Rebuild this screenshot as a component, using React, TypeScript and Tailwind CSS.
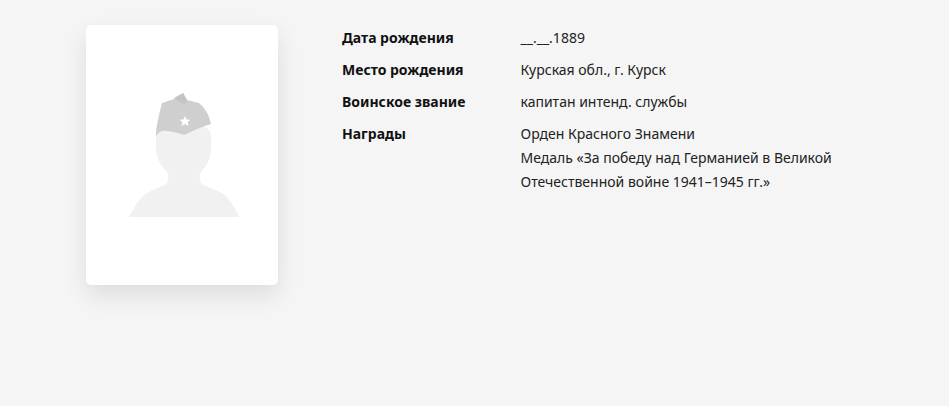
const facts = [
  { label: 'Дата рождения', lines: ['__.__.1889'] },
  { label: 'Место рождения', lines: ['Курская обл., г. Курск'] },
  { label: 'Воинское звание', lines: ['капитан интенд. службы'] },
  {
    label: 'Награды',
    lines: [
      'Орден Красного Знамени',
      'Медаль «За победу над Германией в Великой',
      'Отечественной войне 1941–1945 гг.»',
    ],
  },
];

function SoldierPlaceholder() {
  return (
    <svg viewBox="0 0 140 150" className="h-[150px] w-[140px]">
      <path
        fill="#f1f1f1"
        d="M44 56 C44 48 50 44 72 44 C92 44 99 48 99 56 L99 68 C99 80 94 86 89 92 C87 96 87 100 90 104 C96 108 108 110 115 117 C120 123 124 130 127 137 L17 137 C21 129 25 122 31 116 C38 110 48 108 54 104 C57 100 57 96 55 92 C50 86 44 80 44 68 Z"
      />
      <path
        fill="#cfcfcf"
        d="M44 57 C44 46 47 35 50 23 L68 17 L71 13 L75 20 L87 23 C92 27 95 32 97 37 L99 44 C92 46 80 51 72 55 C65 53 57 50 50 51 C47 52 45 54 44 57 Z"
      />
      <path fill="#c4c4c4" d="M62 18 L71 13 L75 20 L73 25 Z" />
      <path
        fill="#ffffff"
        d="M73 36 L74.6 39.6 L78.5 39.8 L75.5 42.3 L76.6 46 L73 44 L69.4 46 L70.5 42.3 L67.5 39.8 L71.4 39.6 Z"
      />
    </svg>
  );
}

export default function App() {
  return (
    <div className="flex h-[406px] items-start gap-16 overflow-hidden bg-[#f5f5f5] pl-[86px] pt-[25px] font-['Noto_Sans','Open_Sans',sans-serif] text-[14px] leading-6 text-[#222222]">
      <div className="flex h-[260px] w-[192px] shrink-0 justify-center rounded-[5px] bg-white pt-[55px] shadow-[0_10px_24px_rgba(0,0,0,0.1)]">
        <SoldierPlaceholder />
      </div>
      <dl className="flex flex-col gap-2 pt-[1px]">
        {facts.map((fact) => (
          <div key={fact.label} className="flex">
            <dt className="w-[178.5px] shrink-0 font-bold text-[#111111]">{fact.label}</dt>
            <dd>
              {fact.lines.map((line) => (
                <div key={line}>{line}</div>
              ))}
            </dd>
          </div>
        ))}
      </dl>
    </div>
  );
}
